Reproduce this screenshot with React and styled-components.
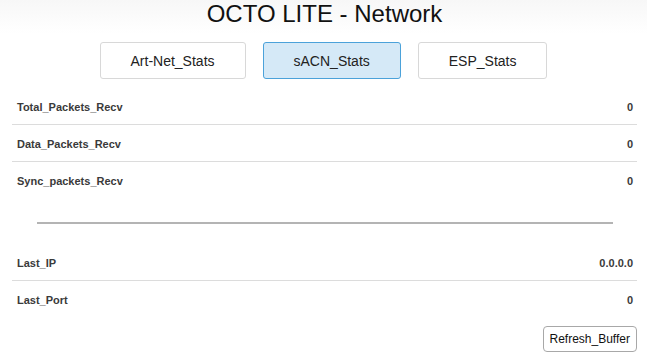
import React from 'react'
import styled, { createGlobalStyle } from 'styled-components';

const GlobalStyle = createGlobalStyle`
    body {
        margin: 0;
        background: #fff;
        font-family: "Liberation Sans", Arial, sans-serif;
        color: #333;
    }
`

const Page = styled.div`
    padding: 0 10px 0 12px;
    background: linear-gradient(to bottom, #f7f7f7 0px, #fff 34px);
`

const Title = styled.h1`
    margin: 0;
    font-size: 24px;
    font-weight: normal;
    line-height: 28px;
    color: #111;
    text-align: center;
`

const Tabs = styled.div`
    display: flex;
    justify-content: center;
    gap: 17px;
    margin: 14px 0 9px;
    padding-right: 2px;
`

const Tab = styled.button`
    height: 37px;
    padding: 0 30px;
    font-family: inherit;
    font-size: 14px;
    color: #222;
    border-radius: 3px;
    border: 1px solid ${p => (p.$active ? '#4ba2da' : '#d8d8d8')};
    background: ${p => (p.$active ? '#d5e9f7' : '#fff')};
    cursor: pointer;
`

const Table = styled.div`
    display: flex;
    flex-direction: column;
`

const Row = styled.div`
    display: flex;
    justify-content: space-between;
    align-items: center;
    padding: 13px 4px 10px 5px;
    font-size: 11px;
    font-weight: bold;
    line-height: 13px;
    color: #3a3a3a;
    border-bottom: 1px solid ${p => (p.$last ? 'transparent' : '#dcdcdc')};
`

const Divider = styled.hr`
    margin: 23px 24px 20px 25px;
    border: 0;
    height: 2px;
    background: #b4b4b4;
`

const Footer = styled.div`
    display: flex;
    justify-content: flex-end;
    margin-top: 8px;
`

const RefreshButton = styled.button`
    height: 26px;
    padding: 0 6px;
    font-family: inherit;
    font-size: 12px;
    color: #111;
    background: #fff;
    border: 1px solid #a8a8a8;
    border-radius: 4px;
    cursor: pointer;
`

const stats = [
    ['Total_Packets_Recv', '0'],
    ['Data_Packets_Recv', '0'],
    ['Sync_packets_Recv', '0'],
]

const last = [
    ['Last_IP', '0.0.0.0'],
    ['Last_Port', '0'],
]

const App = () => {
    return (
        <>
            <GlobalStyle />
            <Page>
                <Title>OCTO LITE - Network</Title>
                <Tabs>
                    <Tab>Art-Net_Stats</Tab>
                    <Tab $active>sACN_Stats</Tab>
                    <Tab>ESP_Stats</Tab>
                </Tabs>
                <Table>
                    {stats.map(([k, v], i) => (
                        <Row key={k} $last={i === stats.length - 1}>
                            <span>{k}</span>
                            <span>{v}</span>
                        </Row>
                    ))}
                </Table>
                <Divider />
                <Table>
                    {last.map(([k, v], i) => (
                        <Row key={k} $last={i === last.length - 1}>
                            <span>{k}</span>
                            <span>{v}</span>
                        </Row>
                    ))}
                </Table>
                <Footer>
                    <RefreshButton>Refresh_Buffer</RefreshButton>
                </Footer>
            </Page>
        </>
    )
}

export default App
